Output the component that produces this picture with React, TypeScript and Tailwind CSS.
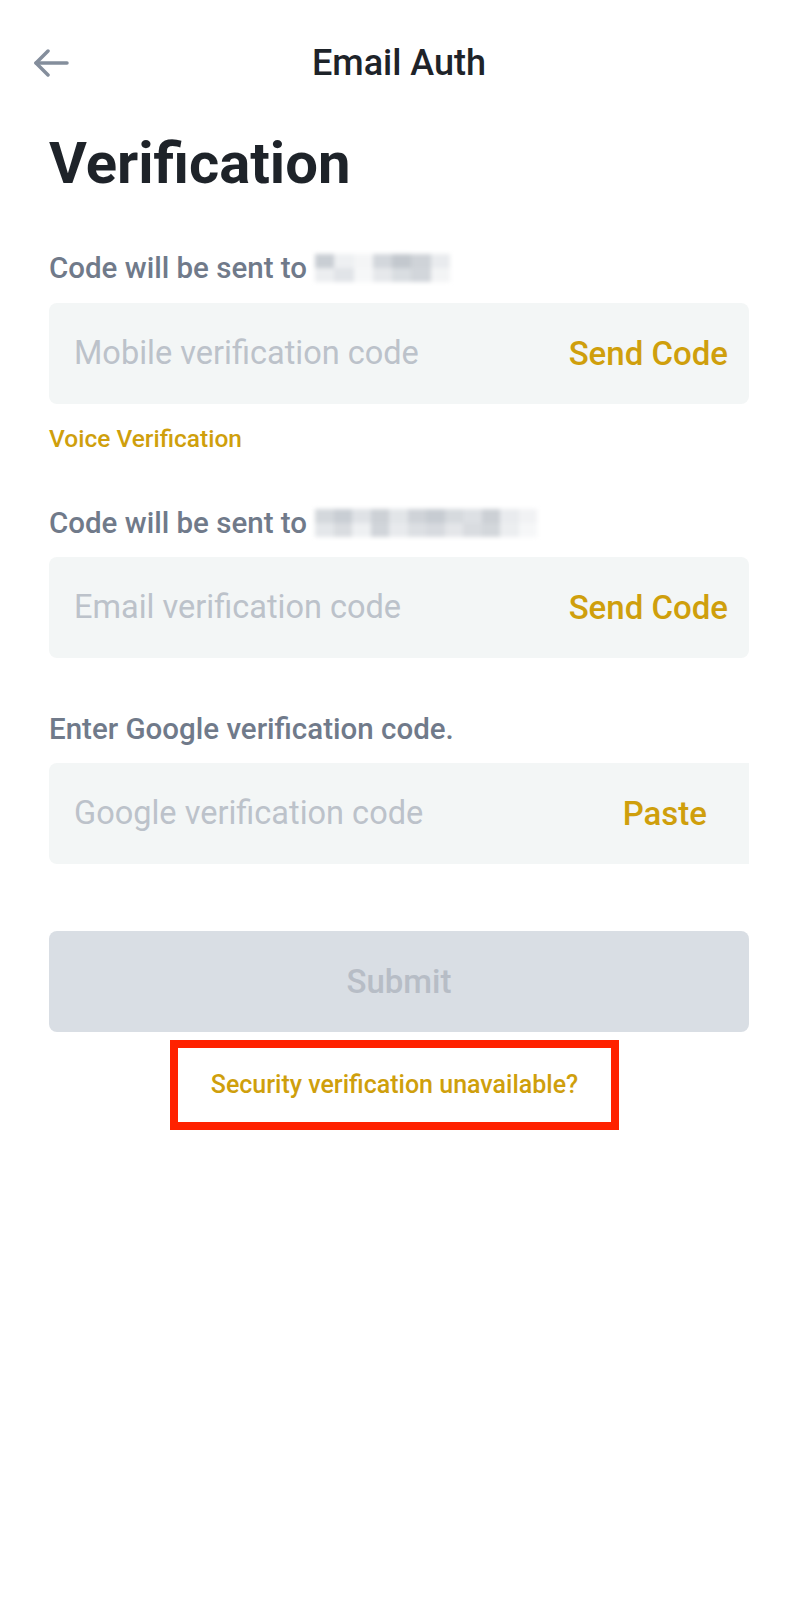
import React from 'react';

const blurCells1 = [
  ['#c9ced4', '#eef0f2', '#f4f5f6', '#d3d7dc', '#c3c8ce', '#cfd3d8', '#e9ebee'],
  ['#eceef0', '#e1e4e8', '#f6f7f8', '#e6e8eb', '#d9dde1', '#d2d6db', '#f3f4f5'],
];

const blurCells2 = [
  ['#d4d8dc', '#c9ced4', '#dfe2e6', '#cdd1d6', '#e2e5e8', '#cfd3d8', '#c7ccd2', '#d6dade', '#dde0e4', '#ccd0d5', '#e9ebee', '#f1f2f4'],
  ['#e4e7ea', '#d9dce0', '#eef0f2', '#d1d5da', '#e8eaed', '#dcdfe3', '#d7dadf', '#e4e6e9', '#d9dce0', '#d3d7db', '#eceef0', '#f6f7f8'],
];

function Blurred({ rows, width }: { rows: string[][]; width: string }) {
  return (
    <div className={`ml-2 flex flex-col blur-[2px] ${width}`}>
      {rows.map((row, i) => (
        <div key={i} className="flex h-[14px]">
          {row.map((c, j) => (
            <div key={j} className="h-full flex-1" style={{ backgroundColor: c }} />
          ))}
        </div>
      ))}
    </div>
  );
}

function Field({
  placeholder,
  action,
  actionPad = 'pr-[21px]',
  rounded = 'rounded-lg',
}: {
  placeholder: string;
  action: string;
  actionPad?: string;
  rounded?: string;
}) {
  return (
    <div className={`flex h-[101px] items-center justify-between bg-[#f3f6f6] pl-[25px] ${actionPad} ${rounded}`}>
      <span className="text-[32.5px] font-normal text-[#bcc2ca]">{placeholder}</span>
      <span className="text-[33px] font-medium text-[#cf9f0c]">{action}</span>
    </div>
  );
}

export default function App() {
  return (
    <div className="min-h-[1600px] w-[798px] bg-white font-['Roboto',sans-serif]">
      <div className="grid h-[126px] grid-cols-[100px_1fr_100px] items-center px-[33px]">
        <svg width="36" height="28" viewBox="0 0 36 28" fill="none" stroke="#848e9c" strokeWidth="3.5" strokeLinecap="round" strokeLinejoin="round">
          <path d="M34 14H3" />
          <path d="M15 2L3 14l12 12" />
        </svg>
        <div className="text-center text-[36px] font-medium text-[#1e2329]">Email Auth</div>
        <div />
      </div>

      <div className="px-[49px]">
        <h1 className="mt-[8px] text-[58px] font-bold leading-none text-[#1e2329]">Verification</h1>

        <div className="mt-[56px] flex h-[40px] items-center">
          <span className="text-[29.5px] font-medium text-[#707a8a]">Code will be sent to</span>
          <Blurred rows={blurCells1} width="w-[135px]" />
        </div>
        <div className="mt-[15px]">
          <Field placeholder="Mobile verification code" action="Send Code" />
        </div>
        <div className="mt-[19px] flex h-[32px] items-center text-[24.5px] font-medium text-[#cf9f0c]">
          Voice Verification
        </div>

        <div className="mt-[48px] flex h-[40px] items-center">
          <span className="text-[29.5px] font-medium text-[#707a8a]">Code will be sent to</span>
          <Blurred rows={blurCells2} width="w-[222px]" />
        </div>
        <div className="mt-[14px]">
          <Field placeholder="Email verification code" action="Send Code" />
        </div>

        <div className="mt-[51px] flex h-[40px] items-center text-[29.5px] font-medium text-[#707a8a]">
          Enter Google verification code.
        </div>
        <div className="mt-[14px]">
          <Field placeholder="Google verification code" action="Paste" actionPad="pr-[42px]" rounded="rounded-l-lg" />
        </div>

        <button className="mt-[67px] flex h-[101px] w-full items-center justify-center rounded-lg bg-[#d9dee4] text-[33px] font-medium text-[#b7bdc6]">
          Submit
        </button>

        <div className="ml-[121px] mt-[8px] flex h-[90px] w-[449px] items-center justify-center border-[8px] border-[#ff2200]">
          <span className="text-[25px] font-medium text-[#cf9f0c]">Security verification unavailable?</span>
        </div>
      </div>
    </div>
  );
}
